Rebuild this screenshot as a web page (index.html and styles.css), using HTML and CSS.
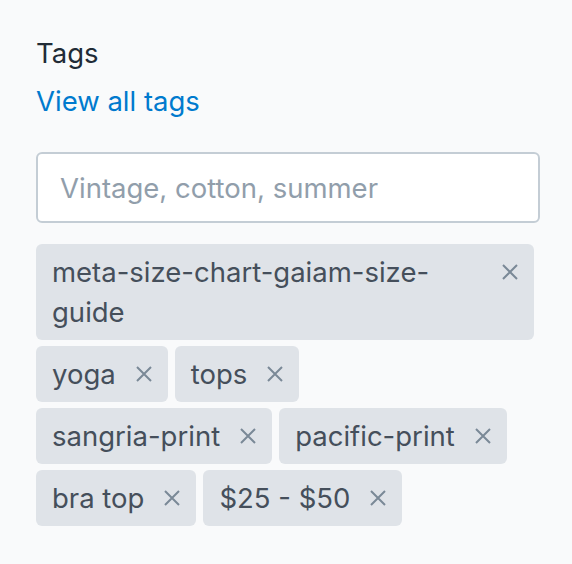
FILE: index.html
```html
<!DOCTYPE html>
<html lang="en">
<head>
<meta charset="utf-8">
<title>Tags</title>
<link rel="stylesheet" href="styles.css">
</head>
<body>
<section class="panel">
  <div class="label">Tags</div>
  <a class="link" href="#">View all tags</a>
  <input class="input" type="text" placeholder="Vintage, cotton, summer">
  <ul class="tags">
    <li class="tag"><span class="tag-text">meta-size-chart-gaiam-size-guide</span><button class="remove" aria-label="Remove"><svg viewBox="0 0 16 16" width="16" height="16"><path d="M1 1L15 15M15 1L1 15"/></svg></button></li>
    <li class="tag"><span class="tag-text">yoga</span><button class="remove" aria-label="Remove"><svg viewBox="0 0 16 16" width="16" height="16"><path d="M1 1L15 15M15 1L1 15"/></svg></button></li>
    <li class="tag"><span class="tag-text">tops</span><button class="remove" aria-label="Remove"><svg viewBox="0 0 16 16" width="16" height="16"><path d="M1 1L15 15M15 1L1 15"/></svg></button></li>
    <li class="tag"><span class="tag-text">sangria-print</span><button class="remove" aria-label="Remove"><svg viewBox="0 0 16 16" width="16" height="16"><path d="M1 1L15 15M15 1L1 15"/></svg></button></li>
    <li class="tag"><span class="tag-text">pacific-print</span><button class="remove" aria-label="Remove"><svg viewBox="0 0 16 16" width="16" height="16"><path d="M1 1L15 15M15 1L1 15"/></svg></button></li>
    <li class="tag"><span class="tag-text">bra top</span><button class="remove" aria-label="Remove"><svg viewBox="0 0 16 16" width="16" height="16"><path d="M1 1L15 15M15 1L1 15"/></svg></button></li>
    <li class="tag"><span class="tag-text">$25 - $50</span><button class="remove" aria-label="Remove"><svg viewBox="0 0 16 16" width="16" height="16"><path d="M1 1L15 15M15 1L1 15"/></svg></button></li>
  </ul>
</section>
</body>
</html>
```

FILE: styles.css
```css
html, body {
  margin: 0;
  padding: 0;
  background: #f9fafb;
}

body {
  font-family: Inter, "Noto Sans", "DejaVu Sans", sans-serif;
  font-size: 27.5px;
  line-height: 40px;
  color: #212b36;
}

.panel {
  padding: 33px 32px 0 36px;
  display: flex;
  flex-direction: column;
  align-items: flex-start;
}

.label {
  color: #212b36;
}

.link {
  margin-top: 8px;
  color: #007ace;
  text-decoration: none;
}

.input {
  box-sizing: border-box;
  margin-top: 31px;
  width: 504px;
  height: 71px;
  padding: 0 22px;
  border: 2px solid #c4cdd5;
  border-radius: 6px;
  background: #ffffff;
  font-family: inherit;
  font-size: 27.5px;
  color: #212b36;
  outline: none;
}

.input::placeholder {
  color: #919eab;
}

.tags {
  list-style: none;
  margin: 21px 0 0 0;
  padding: 0;
  width: 498px;
  display: flex;
  flex-wrap: wrap;
  column-gap: 7px;
  row-gap: 6px;
}

.tag {
  box-sizing: border-box;
  display: flex;
  align-items: flex-start;
  max-width: 100%;
  min-height: 56px;
  padding: 8px 4px 8px 16px;
  background: #dfe3e8;
  border-radius: 6px;
  color: #454f5b;
}

.tag-text {
  min-width: 0;
}

.remove {
  flex: none;
  width: 40px;
  height: 40px;
  margin-left: 8px;
  padding: 0;
  border: 0;
  background: transparent;
  display: flex;
  align-items: center;
  justify-content: center;
  cursor: pointer;
}

.remove svg {
  display: block;
  width: 16px;
  height: 16px;
  fill: none;
  stroke: #7a8997;
  stroke-width: 2;
}
```
